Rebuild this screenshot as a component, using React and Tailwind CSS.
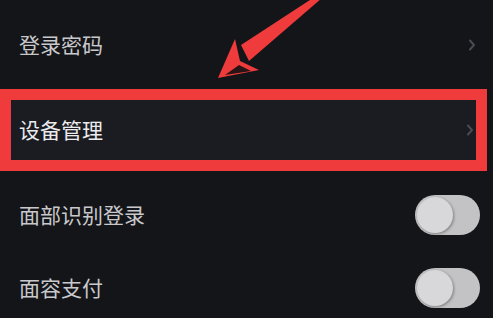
import React from 'react'

const font = { fontFamily: '"Noto Sans CJK SC", "Noto Sans", sans-serif' }

function Chevron({ className }) {
  return (
    <svg width="8" height="12" viewBox="0 0 8 12" className={className}>
      <path d="M2 1.5 L6 6 L2 10.5" fill="none" stroke="#4a4b52" strokeWidth="2" strokeLinecap="round" strokeLinejoin="round" />
    </svg>
  )
}

function Toggle() {
  return (
    <div className="w-[65px] h-[40px] rounded-full bg-[#c3c3c5] flex items-center p-[2px]">
      <div className="w-[36px] h-[36px] rounded-full bg-[#d8d8da] shadow-[1px_1px_3px_rgba(0,0,0,0.35)]" />
    </div>
  )
}

export default function App() {
  return (
    <div className="relative w-[493px] h-[318px] overflow-hidden bg-[#141519]" style={font}>
      <div className="h-[89px] flex items-center justify-between pl-[19px] pr-[17px]">
        <span className="text-[21px] text-[#c9c9cc]">登录密码</span>
        <Chevron />
      </div>

      <div className="w-[487px] h-[82px] border-[11px] border-[#ef3b3b] bg-[#1b1c22] flex items-center justify-between pl-[8px] pr-[2px]">
        <span className="text-[21px] text-[#ececee]">设备管理</span>
        <Chevron />
      </div>

      <div className="mt-[7px] h-[73px] flex items-center justify-between pl-[19px] pr-[13px]">
        <span className="text-[21px] text-[#c9c9cc]">面部识别登录</span>
        <Toggle />
      </div>
      <div className="h-[73px] flex items-center justify-between pl-[19px] pr-[13px]">
        <span className="text-[21px] text-[#c9c9cc]">面容支付</span>
        <Toggle />
      </div>

      <svg className="absolute left-0 top-0 pointer-events-none" width="493" height="100" viewBox="0 0 493 100">
        <polygon points="322,-2 313,-2 241,45 249,61" fill="#ef3b3b" />
        <polygon points="235,39 218,78 259,70 240,61" fill="#ef3b3b" />
        <polygon points="239,65 225,75 251,71" fill="#2a1416" />
      </svg>
    </div>
  )
}
